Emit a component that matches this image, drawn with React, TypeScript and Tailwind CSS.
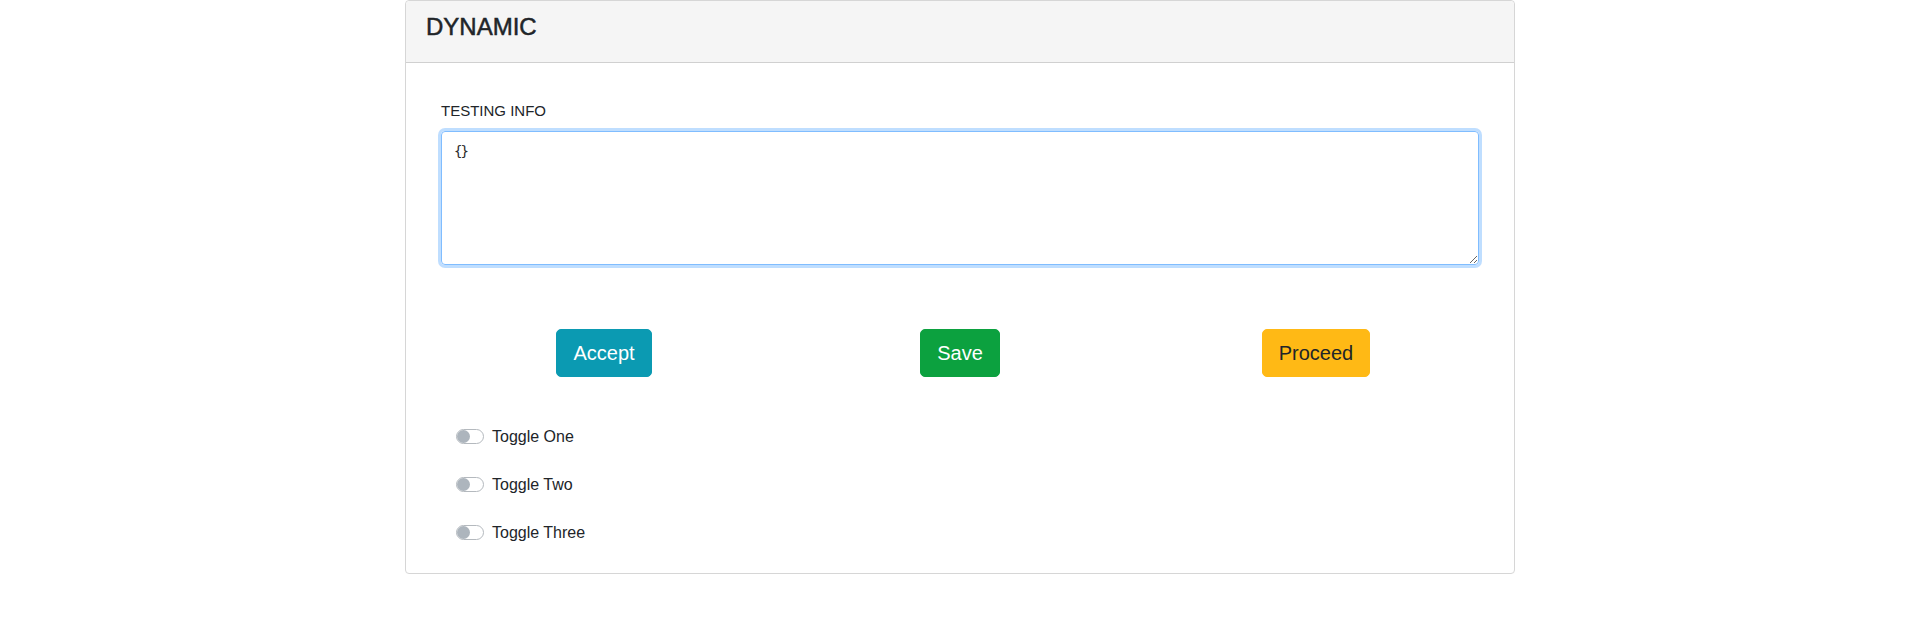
import React from 'react';

const toggles = ['Toggle One', 'Toggle Two', 'Toggle Three'];

const Switch: React.FC = () => (
  <span className="relative inline-block w-[28px] h-[15px] rounded-full border border-[#b4b9be] bg-white shrink-0">
    <span className="absolute left-[0px] top-[0px] w-[13px] h-[13px] rounded-full bg-[#adb5bd]" />
  </span>
);

export default function App() {
  return (
    <div
      className="min-h-[622px] bg-white text-[#212529]"
      style={{ fontFamily: '"Liberation Sans", Arial, sans-serif' }}
    >
      <div className="w-[1140px] mx-auto px-[15px]">
        <div className="border border-[#d6d6d6] rounded-[4px] bg-white">
          <div className="bg-[#f5f5f5] border-b border-[#d0d0d0] px-5 pt-3 pb-3 rounded-t-[4px]">
            <h4 className="text-[24px] leading-[1.2] font-medium mb-2 [-webkit-text-stroke:0.5px_#212529]">DYNAMIC</h4>
          </div>

          <div className="px-5 pt-5 pb-[28px]">
            <div className="px-[15px] pt-4">
              <label className="block text-[15px] leading-[24px] mb-2">TESTING INFO</label>
              <textarea
                readOnly
                defaultValue="{}"
                rows={5}
                className="block w-full h-[134px] px-3 pt-[9px] pb-[6px] text-[14px] leading-[1.5] tracking-[-2px] text-[#2b2b2b] border border-[#80bdff] rounded-[4px] outline-none shadow-[0_0_0_3px_rgba(0,123,255,0.25)]"
                style={{ fontFamily: '"DejaVu Sans Mono", "Liberation Mono", monospace' }}
              />
            </div>

            <div className="grid grid-cols-3 mt-16">
              <div className="text-center">
                <button className="px-4 py-2 text-[20px] leading-[1.5] rounded-[5px] border border-[#0b9ab2] bg-[#0b9ab2] text-white">
                  Accept
                </button>
              </div>
              <div className="text-center">
                <button className="px-4 py-2 text-[20px] leading-[1.5] rounded-[5px] border border-[#0ca13f] bg-[#0ca13f] text-white">
                  Save
                </button>
              </div>
              <div className="text-center">
                <button className="px-4 py-2 text-[20px] leading-[1.5] rounded-[5px] border border-[#ffb915] bg-[#ffb915] text-[#212529]">
                  Proceed
                </button>
              </div>
            </div>

            <div className="mt-12 pl-[30px] flex flex-col gap-6">
              {toggles.map((t) => (
                <div key={t} className="flex items-center gap-2 text-[16px] leading-[1.5]">
                  <Switch />
                  <span>{t}</span>
                </div>
              ))}
            </div>
          </div>
        </div>
      </div>
    </div>
  );
}
